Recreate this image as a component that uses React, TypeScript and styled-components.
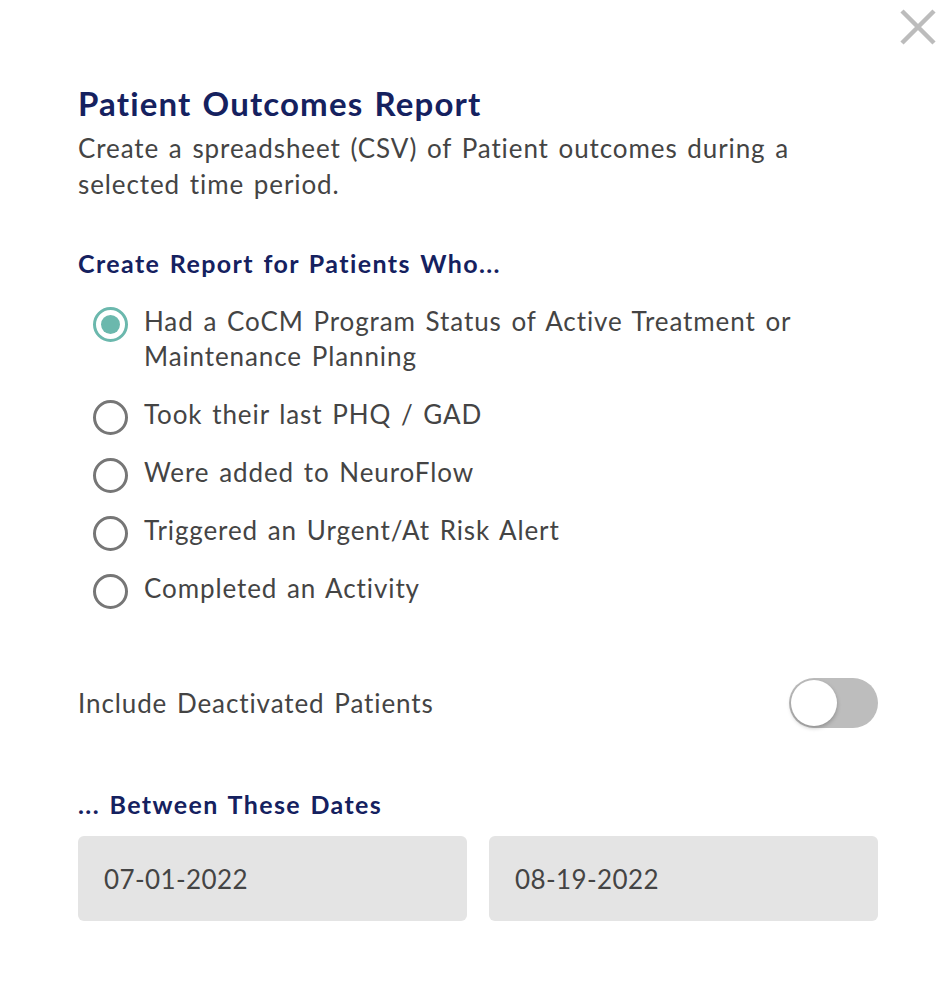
import React, { useState } from "react";
import styled, { createGlobalStyle } from "styled-components";

const Global = createGlobalStyle`
  html, body { margin: 0; padding: 0; background: #ffffff; }
  body { font-family: Lato, "Open Sans", sans-serif; }
`;

const Modal = styled.div`
  position: relative;
  width: 946px;
  min-height: 982px;
  box-sizing: border-box;
  padding: 83px 68px 0 78px;
  background: #fff;
`;

const Close = styled.button`
  position: absolute;
  top: 8px;
  right: 9px;
  width: 38px;
  height: 38px;
  padding: 0;
  border: none;
  background: transparent;
  cursor: pointer;
`;

const Title = styled.h1`
  margin: 0;
  font-size: 33px;
  font-weight: 700;
  letter-spacing: 1.15px;
  word-spacing: 2px;
  color: #15215f;
  line-height: 40px;
`;

const Body = styled.span`
  font-size: 26px;
  letter-spacing: 0.9px;
  word-spacing: 2.2px;
  color: #444;
`;

const Description = styled(Body).attrs({ as: "p" })`
  display: block;
  margin: 7px 0 0;
  line-height: 36px;
  max-width: 740px;
`;

const SectionTitle = styled.h2<{ $top: number }>`
  margin: ${(p) => p.$top}px 0 0;
  font-size: 25px;
  font-weight: 700;
  letter-spacing: 1.4px;
  word-spacing: 2px;
  color: #15215f;
  line-height: 32px;
`;

const Options = styled.div`
  display: flex;
  flex-direction: column;
  gap: 23px;
  margin-top: 25px;
  padding-left: 15px;
  max-width: 720px;
`;

const Option = styled.label`
  display: flex;
  align-items: flex-start;
  gap: 16px;
  cursor: pointer;
`;

const Radio = styled.span<{ $checked: boolean }>`
  flex: none;
  width: 35px;
  height: 35px;
  margin: 3px 0 -3px;
  box-sizing: border-box;
  border-radius: 50%;
  border: 3px solid ${(p) => (p.$checked ? "#6bb8ad" : "#767676")};
  display: flex;
  align-items: center;
  justify-content: center;
  &::after {
    content: "";
    width: 19px;
    height: 19px;
    border-radius: 50%;
    background: #6bb8ad;
    display: ${(p) => (p.$checked ? "block" : "none")};
  }
`;

const OptionText = styled(Body)`
  line-height: 35px;
`;

const ToggleRow = styled.div`
  display: flex;
  align-items: center;
  justify-content: space-between;
  margin-top: 72px;
`;

const Switch = styled.button<{ $on: boolean }>`
  position: relative;
  width: 89px;
  height: 50px;
  border-radius: 25px;
  border: none;
  padding: 0;
  background: ${(p) => (p.$on ? "#6bb8ad" : "#bdbdbd")};
  cursor: pointer;
  &::after {
    content: "";
    position: absolute;
    top: 2px;
    left: ${(p) => (p.$on ? "41px" : "2px")};
    width: 46px;
    height: 46px;
    border-radius: 50%;
    background: #fff;
    box-shadow: 0 2px 4px rgba(0, 0, 0, 0.25);
  }
`;

const DateRow = styled.div`
  display: grid;
  grid-template-columns: 1fr 1fr;
  gap: 22px;
  margin-top: 16px;
`;

const DateBox = styled(Body)`
  height: 85px;
  border-radius: 6px;
  background: #e4e4e4;
  display: flex;
  align-items: center;
  padding-left: 26px;
  letter-spacing: 0.4px;
`;

const options = [
  "Had a CoCM Program Status of Active Treatment or Maintenance Planning",
  "Took their last PHQ / GAD",
  "Were added to NeuroFlow",
  "Triggered an Urgent/At Risk Alert",
  "Completed an Activity",
];

export default function App() {
  const [selected, setSelected] = useState(0);
  const [on, setOn] = useState(false);
  return (
    <>
      <Global />
      <Modal>
        <Close aria-label="Close">
          <svg width="38" height="38" viewBox="0 0 38 38">
            <path d="M3 3 L35 35 M35 3 L3 35" stroke="#bcbcbc" strokeWidth="4.5" strokeLinecap="butt" />
          </svg>
        </Close>
        <Title>Patient Outcomes Report</Title>
        <Description>
          Create a spreadsheet (CSV) of Patient outcomes during a selected time period.
        </Description>
        <SectionTitle $top={45}>Create Report for Patients Who...</SectionTitle>
        <Options>
          {options.map((o, i) => (
            <Option key={o} onClick={() => setSelected(i)}>
              <Radio $checked={selected === i} />
              <OptionText>{o}</OptionText>
            </Option>
          ))}
        </Options>
        <ToggleRow>
          <Body>Include Deactivated Patients</Body>
          <Switch $on={on} onClick={() => setOn(!on)} aria-label="Include Deactivated Patients" />
        </ToggleRow>
        <SectionTitle $top={60}>... Between These Dates</SectionTitle>
        <DateRow>
          <DateBox>07-01-2022</DateBox>
          <DateBox>08-19-2022</DateBox>
        </DateRow>
      </Modal>
    </>
  );
}
